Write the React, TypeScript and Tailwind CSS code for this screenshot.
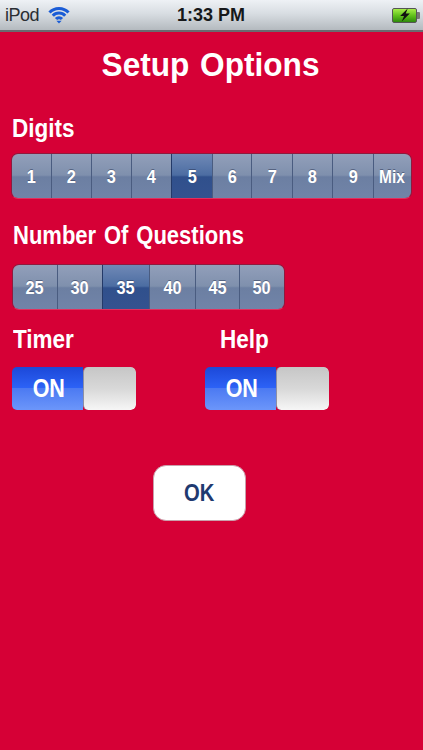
const font = { fontFamily: '"Liberation Sans", Arial, sans-serif' };

function Segmented({ items, active, cellClass, textClass, className }: { items: string[]; active: string; cellClass: (i: number) => string; textClass: (i: number) => string; className: string }) {
  return (
    <div className={`flex h-[46px] rounded-[7px] border border-[#8e1a3e] border-b-[#e2305c] overflow-hidden ${className}`}>
      {items.map((t, i) => {
        const on = t === active;
        return (
          <div key={t} className={`relative flex items-center justify-center text-white font-bold ${cellClass(i)} ${i > 0 ? 'border-l border-[#4a5c80]' : ''} ${on ? 'bg-[linear-gradient(to_bottom,#7089b6_0%,#4c6da2_48%,#30508c_52%,#34528f_100%)] border-[#243a68]' : 'bg-[linear-gradient(to_bottom,#929fba_0%,#7f90ad_48%,#6c7fa2_52%,#7184a8_100%)]'}`}>
            <span className={`pt-[2px] [text-shadow:0_-1px_0_rgba(40,50,80,0.5)] ${textClass(i)}`}>{t}</span>
          </div>
        );
      })}
    </div>
  );
}

function Toggle() {
  return (
    <div className="flex w-[124px] h-[43px] rounded-[5px] overflow-hidden">
      <div className="w-[71px] flex items-center justify-center pl-[2px] text-white text-[25px] font-bold bg-[linear-gradient(to_bottom,#1c48d8_0%,#2c62f6_48%,#4c7af2_50%,#6c96fa_100%)]">
        <span className="scale-x-[0.86]">ON</span>
      </div>
      <div className="flex-1 rounded-[5px] border-l border-[#8d90a4] bg-[linear-gradient(to_bottom,#c6c6c6_0%,#d8d8d8_50%,#f6f6f6_100%)]" />
    </div>
  );
}

export default function App() {
  const digitW = ['w-[39px]', 'w-[40px]', 'w-[40px]', 'w-[40px]', 'w-[41px]', 'w-[39px]', 'w-[41px]', 'w-[40px]', 'w-[41px]', 'flex-1'];
  const qW = ['w-[44px]', 'w-[45px]', 'w-[47px]', 'w-[46px]', 'w-[44px]', 'flex-1'];
  return (
    <div style={font} className="w-[423px] h-[750px] bg-[#d60036] overflow-hidden flex flex-col">
      <div className="h-[32px] shrink-0 flex items-center justify-between relative border-b-2 border-[#6a6a70] bg-[linear-gradient(to_bottom,#eef1f5_0%,#d8dde2_45%,#b4babf_100%)]">
        <div className="flex items-center pl-[5px] gap-[9px]">
          <span className="text-[18px] text-[#2a2e33] leading-none tracking-[-0.5px]">iPod</span>
          <svg width="22" height="18" viewBox="0 0 22 18" fill="none" stroke="#1a5cd6" strokeWidth="3" strokeLinecap="butt">
            <path d="M1.5 6.5C6.5 1 15.5 1 20.5 6.5" />
            <path d="M4.8 9.8C8 6.2 14 6.2 17.2 9.8" />
            <path d="M8 13C9.5 11.2 12.5 11.2 14 13" />
            <path d="M11 17.5L8.4 14.8h5.2z" fill="#1a5cd6" stroke="none" />
          </svg>
        </div>
        <span className="absolute left-[177px] top-[4px] text-[#16181a] text-[18px] font-bold leading-[22px]">1:33 PM</span>
        <div className="flex items-center pr-[3px]">
          <div className="w-[25px] h-[15px] border border-[#555] rounded-[2px] bg-[linear-gradient(to_bottom,#a6ee4a_0%,#62c21c_50%,#2e8a0c_100%)] flex items-center justify-center">
            <svg width="14" height="14" viewBox="0 0 13 13"><path d="M9 0.5L2 7.5h3.6L3.5 12.5l7.5-7.4H7.2z" fill="#111" /></svg>
          </div>
          <div className="w-[3px] h-[7px] bg-[#777] rounded-r-[1px]" />
        </div>
      </div>

      <h1 className="mt-[12px] pr-[2px] text-center text-white text-[34px] leading-[40px] font-bold scale-x-[0.93] [word-spacing:2px]">Setup Options</h1>

      <div className="mt-[29px] ml-[12px] text-white text-[25px] leading-[30px] font-bold scale-x-[0.9] origin-left">Digits</div>
      <Segmented
        className="mt-[10px] mx-[11px] w-[401px]"
        items={['1', '2', '3', '4', '5', '6', '7', '8', '9', 'Mix']}
        active="5"
        cellClass={(i) => digitW[i]}
        textClass={(i) => (i === 9 ? 'text-[18px] scale-x-[0.86]' : 'text-[19px] scale-x-[0.86]')}
      />

      <div className="mt-[21px] ml-[13px] text-white text-[25px] leading-[30px] font-bold scale-x-[0.88] origin-left [word-spacing:2px]">Number Of Questions</div>
      <Segmented
        className="mt-[14px] ml-[12px] w-[273px]"
        items={['25', '30', '35', '40', '45', '50']}
        active="35"
        cellClass={(i) => qW[i]}
        textClass={() => 'text-[19px] scale-x-[0.86]'}
      />

      <div className="mt-[14px] flex text-white text-[25px] leading-[30px] font-bold">
        <span className="ml-[13px] w-[207px] scale-x-[0.9] origin-left">Timer</span>
        <span className="scale-x-[0.9] origin-left">Help</span>
      </div>
      <div className="mt-[13px] flex pl-[12px] gap-[69px]">
        <Toggle />
        <Toggle />
      </div>

      <div className="mt-[55px] self-start ml-[153px] w-[93px] h-[56px] rounded-[13px] bg-white border border-[#c9a0ac] flex items-center justify-center text-[#1f3a70] text-[23px] font-bold">
        <span className="scale-x-[0.88]">OK</span>
      </div>
    </div>
  );
}
